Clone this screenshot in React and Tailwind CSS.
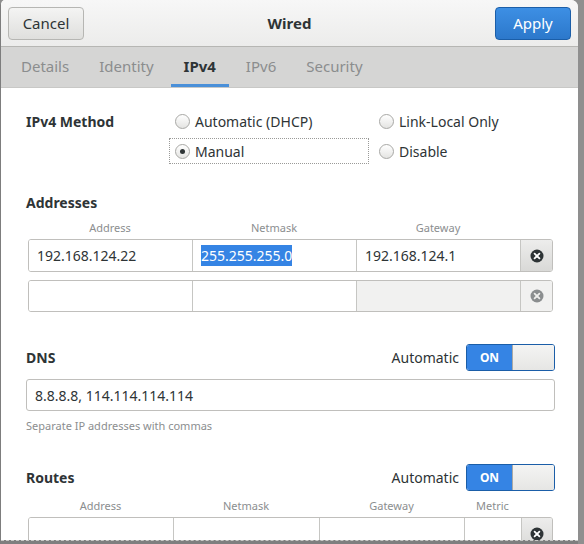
import { useState } from "react";

const font = { fontFamily: '"Noto Sans", "Open Sans", sans-serif' };

function RemoveIcon({ dim }) {
  return (
    <svg width="14" height="14" viewBox="0 0 14 14">
      <circle cx="7" cy="7" r="6.5" fill={dim ? "#8b8e8f" : "#2e3436"} />
      <path
        d="M4.6 4.6 L9.4 9.4 M9.4 4.6 L4.6 9.4"
        stroke={dim ? "#eeeeec" : "#ffffff"}
        strokeWidth="1.8"
        strokeLinecap="round"
      />
    </svg>
  );
}

function Radio({ checked }) {
  return (
    <span className="w-[15px] h-[15px] rounded-full border border-[#a8a8a5] bg-gradient-to-b from-[#ffffff] to-[#e4e4e2] flex items-center justify-center shrink-0">
      {checked && <span className="w-[5px] h-[5px] rounded-full bg-[#2e3436]" />}
    </span>
  );
}

function Switch() {
  return (
    <div className="flex h-[27px] w-[89px] rounded-[3px] overflow-hidden border border-[#1b5ea8]">
      <div className="w-[45px] bg-[#3584e4] text-white text-[12px] font-bold flex items-center justify-center">
        ON
      </div>
      <div className="flex-1 bg-gradient-to-b from-[#f4f4f3] to-[#e6e6e4] border-l border-[#a9a9a6]" />
    </div>
  );
}

function Cell({ children, w, disabled }) {
  return (
    <div
      className={`h-full flex items-center px-[8px] text-[14px] text-[#2e3436] border-r border-[#c6c6c3] ${
        disabled ? "bg-[#f1f1f0]" : "bg-white"
      }`}
      style={{ width: w }}
    >
      {children}
    </div>
  );
}

function Row({ cells, dim, height = 33 }) {
  return (
    <div
      className="ml-[2px] w-[525px] flex border border-[#c0bfbc] rounded-[3px] overflow-hidden"
      style={{ height }}
    >
      {cells.map((c, i) => (
        <Cell key={i} w={c.w} disabled={c.disabled}>
          {c.content}
        </Cell>
      ))}
      <div
        className={`flex-1 flex items-center justify-center ${
          dim
            ? "bg-[#f1f1f0]"
            : "bg-gradient-to-b from-[#ededec] to-[#d9d9d7]"
        }`}
      >
        <RemoveIcon dim={dim} />
      </div>
    </div>
  );
}

function Headers({ cols }) {
  return (
    <div className="ml-[2px] w-[525px] flex h-[16px] text-[11px] text-[#8b8e8f]">
      {cols.map((c) => (
        <div key={c.label} className="text-center" style={{ width: c.w }}>
          {c.label}
        </div>
      ))}
    </div>
  );
}

export default function App() {
  const [tab] = useState("IPv4");
  const tabs = ["Details", "Identity", "IPv4", "IPv6", "Security"];

  return (
    <div className="w-[584px] h-[544px] bg-[#8f8f8f] overflow-hidden flex" style={font}>
      <div className="w-[578px] h-full flex flex-col bg-white border-l border-[#7d7d7d] rounded-tr-[7px] rounded-tl-[5px] overflow-hidden">
        {/* HEADER BAR */}
        <div className="h-[47px] shrink-0 flex items-center justify-between px-[7px] pt-[1px] bg-gradient-to-b from-[#f7f7f7] to-[#ececeb] border-b border-[#b6b6b3]">
          <button className="w-[76px] h-[33px] rounded-[4px] border border-[#b6b6b3] bg-gradient-to-b from-[#f4f4f3] to-[#dfdfdd] text-[15px] text-[#2e3436]">
            Cancel
          </button>
          <div className="text-[15px] font-bold text-[#2e3436]">Wired</div>
          <button className="w-[76px] h-[33px] rounded-[4px] border border-[#1b5ea8] bg-gradient-to-b from-[#3d8fe4] to-[#2c78cb] text-[15px] text-white">
            Apply
          </button>
        </div>

        {/* TABS */}
        <div className="h-[41px] shrink-0 flex items-stretch pl-[5px] pb-[1px] bg-[#d5d5d4] border-b border-[#c8c8c6]">
          {tabs.map((t) => (
            <div
              key={t}
              className={`relative mx-[2px] px-[13px] flex items-center text-[15px] ${
                t === tab ? "font-bold text-[#2e3436]" : "text-[#8b8d8e]"
              }`}
            >
              {t}
              {t === tab && (
                <span className="absolute left-0 right-0 -bottom-[1px] h-[3px] bg-[#4a90d9]" />
              )}
            </div>
          ))}
        </div>

        {/* CONTENT */}
        <div className="flex-1 min-h-0 overflow-hidden pl-[25px] pr-[23px] pt-[19px] text-[#2e3436] text-[14px]">
          {/* IPv4 method */}
          <div className="flex">
            <div className="w-[143px] h-[28px] flex items-center font-bold">IPv4 Method</div>
            <div className="flex flex-col gap-[2px]">
              <div className="flex h-[28px] items-center">
                <div className="w-[210px] flex items-center gap-[5px] pl-[6px]">
                  <Radio />
                  <span>Automatic (DHCP)</span>
                </div>
                <div className="flex items-center gap-[5px]">
                  <Radio />
                  <span>Link-Local Only</span>
                </div>
              </div>
              <div className="flex h-[28px] items-center">
                <div className="w-[200px] mr-[10px] h-[26px] flex items-center gap-[5px] pl-[5px] border border-dotted border-[#9a9a98]">
                  <Radio checked />
                  <span>Manual</span>
                </div>
                <div className="flex items-center gap-[5px]">
                  <Radio />
                  <span>Disable</span>
                </div>
              </div>
            </div>
          </div>

          {/* Addresses */}
          <div className="mt-[27px] h-[20px] flex items-center font-bold">Addresses</div>
          <div className="mt-[8px]">
            <Headers
              cols={[
                { label: "Address", w: 164 },
                { label: "Netmask", w: 164 },
                { label: "Gateway", w: 164 },
              ]}
            />
          </div>
          <div className="mt-[3px]">
            <Row
              cells={[
                { w: 164, content: "192.168.124.22" },
                {
                  w: 164,
                  content: (
                    <span className="bg-[#3584e4] text-white">255.255.255.0</span>
                  ),
                },
                { w: 164, content: "192.168.124.1" },
              ]}
            />
          </div>
          <div className="mt-[8px]">
            <Row
              dim
              height={32}
              cells={[
                { w: 164, content: "" },
                { w: 164, content: "" },
                { w: 164, content: "", disabled: true },
              ]}
            />
          </div>

          {/* DNS */}
          <div className="mt-[32px] flex items-center justify-between">
            <span className="font-bold">DNS</span>
            <div className="flex items-center gap-[7px]">
              <span>Automatic</span>
              <Switch />
            </div>
          </div>
          <div className="mt-[8px] h-[32px] flex items-center px-[8px] border border-[#c0bfbc] rounded-[3px]">
            8.8.8.8, 114.114.114.114
          </div>
          <div className="mt-[8px] h-[14px] flex items-center text-[11px] text-[#8b8e8f]">
            Separate IP addresses with commas
          </div>

          {/* Routes */}
          <div className="mt-[31px] flex items-center justify-between">
            <span className="font-bold">Routes</span>
            <div className="flex items-center gap-[7px]">
              <span>Automatic</span>
              <Switch />
            </div>
          </div>
          <div className="mt-[7px]">
            <Headers
              cols={[
                { label: "Address", w: 145 },
                { label: "Netmask", w: 146 },
                { label: "Gateway", w: 145 },
                { label: "Metric", w: 57 },
              ]}
            />
          </div>
          <div className="mt-[3px]">
            <Row
              cells={[
                { w: 145, content: "" },
                { w: 146, content: "" },
                { w: 145, content: "" },
                { w: 57, content: "" },
              ]}
            />
          </div>
        </div>

        {/* bottom edge */}
        <div className="h-[4px] shrink-0 border-t border-dashed border-[#c9c9c7] bg-[#7f7f7f]" />
      </div>
    </div>
  );
}
